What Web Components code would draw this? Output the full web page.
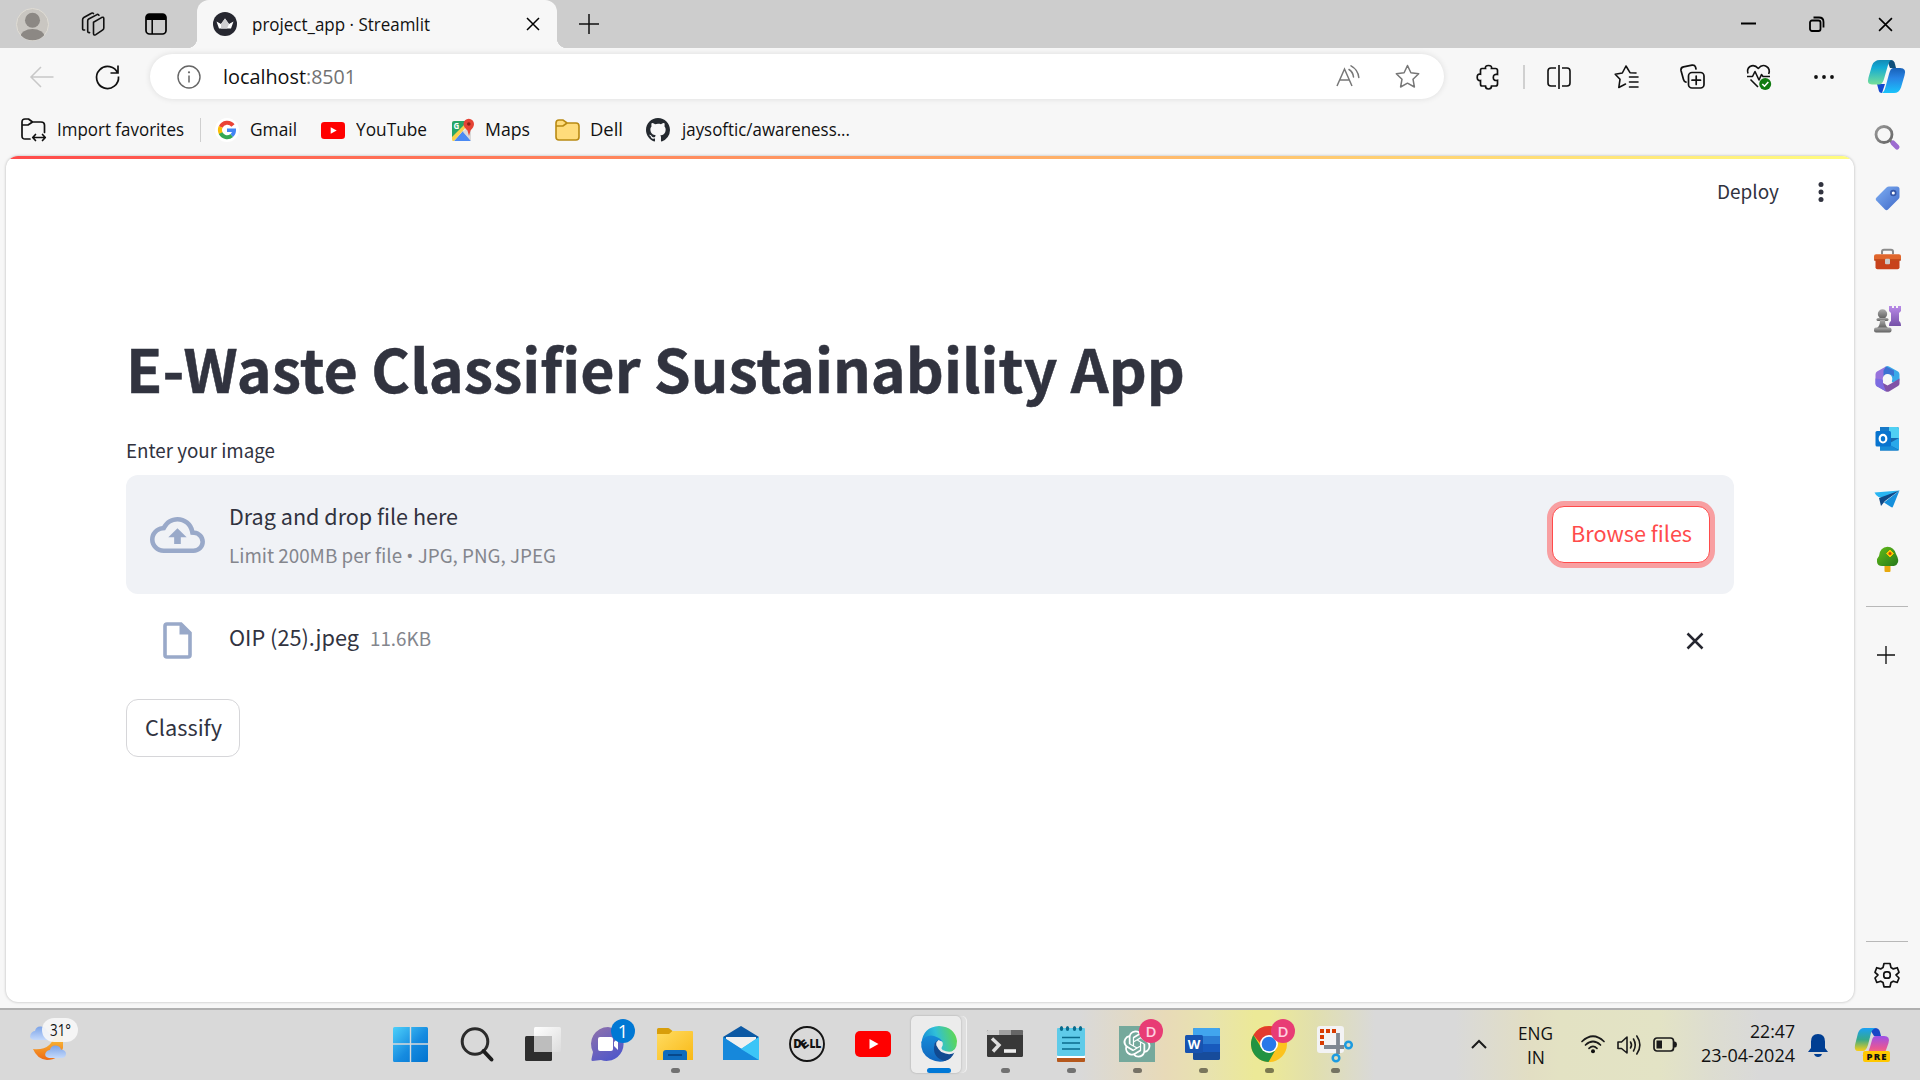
<!DOCTYPE html>
<html lang="en"><head><meta charset="utf-8"><title>project_app · Streamlit</title>
<style>
html,body{margin:0;width:1920px;height:1080px;overflow:hidden;background:#f7f7f7}
body{font-family:"Open Sans","Noto Sans",sans-serif;font-size:18px;color:#111}
</style></head><body>
<desk-top></desk-top>
<script>
const ICONS={
avatar:[33,33,`<circle cx="16.5" cy="16.5" r="16" fill="#c9c6c1" stroke="#e0ddd5" stroke-width="1"/><clipPath id="c"><circle cx="16.5" cy="16.5" r="15.8"/></clipPath><g fill="#8c8884" clip-path="url(#c)"><circle cx="16.5" cy="12.2" r="7.5"/><ellipse cx="16.5" cy="28.5" rx="12" ry="7.5"/></g>`],
spaces:[25,24,`<g fill="none" stroke="#111" stroke-width="1.6" stroke-linejoin="round" stroke-linecap="round"><path d="M13.5 10.2 21.5 5.6q2.2-1 2.3 1v9.4q0 1.2-1 1.8l-7 4.8q-2.3 1.2-2.3-1z"/><path d="M9.6 20.6q-1.9.3-1.9-1.6V8.8q0-1.2 1-1.8L17 2.6q1.4-.6 1.9.6"/><path d="M4.6 18q-2 .4-2-1.6V7.8q0-1.6 1.2-2.3L11.5 1.2q1.4-.6 2 .4"/></g>`],
tabs:[22,22,`<rect x="1" y="1" width="20" height="20" rx="3.5" fill="none" stroke="#000" stroke-width="1.7"/><path d="M1 7V4.5Q1 1 4.500 1h13Q21 1 21 4.500V7z"/><path d="M7.200 6v15" stroke="#000" stroke-width="1.500"/>`],
crown:[24,24,`<circle cx="12" cy="12" r="12" fill="#262730"/><path d="M3.500 9.500 8 12l4-5.500 4 5.500 4.500-2.500-2.500 7H6z" fill="#fff"/><path d="M8 12l4-5.500 4 5.500-2 4.500H8z" fill="#cfcfd2"/>`],
x:[14,14,`<path d="M1 1 13 13M13 1 1 13" stroke="#000" stroke-width="1.500"/>`],
plus:[20,20,`<path d="M10 0V20M0 10H20" stroke="#111" stroke-width="1.500"/>`],
min:[16,16,`<path d="M0 7.500H15" stroke="#000" stroke-width="2"/>`],
restore:[16,16,`<g fill="none" stroke="#000" stroke-width="1.800"><rect x="1" y="4.500" width="10.500" height="10.500" rx="2"/><path d="M4.500 1.500H10Q14.500 1.500 14.500 6v5.500"/></g>`],
back:[24,22,`<path d="M23.500 11H1M11 1 1 11 11 21" fill="none" stroke="#c8c8c8" stroke-width="1.500"/>`],
reload:[25,25,`<path d="M22.800 9.500A11 11 0 1 0 23.500 12.500M23 1.500V9H15.500" fill="none" stroke="#111" stroke-width="1.700"/>`],
info:[24,24,`<circle cx="12" cy="12" r="11" fill="none" stroke="#666" stroke-width="1.400"/><path d="M12 10.500V17.500" stroke="#666" stroke-width="1.500"/><circle cx="12" cy="7.300" r="1.100" fill="#666"/>`],
read:[24,24,`<g fill="none" stroke="#777" stroke-width="1.500"><path d="M1 21 8.500 4 16 21M3.800 15H13.300"/><path d="M13 4.500Q17 7 17.500 12M15 .8Q22 4.500 22.800 12.500" stroke-linecap="round"/></g>`],
star:[25,25,`<path d="M12.500 1.500 15.900 8.700 23.700 9.700 18 15.200 19.400 23 12.500 19.200 5.600 23 7 15.200 1.300 9.700 9.100 8.700z" fill="none" stroke="#777" stroke-width="1.500" stroke-linejoin="round"/>`],
puzzle:[24,26,`<path d="M6 4.500H9.500Q8.800 1.500 12.500 1.500T15.500 4.500H19.500Q21.500 4.500 21.500 6.500V10.500Q17.300 9.800 17.300 13.500T21.500 16.300V20Q21.500 22 19.500 22H15.500Q15.500 25 12.500 25T9.500 22H6Q4.500 22 4.500 20V16.500Q1.200 17 1.200 13.300T4.500 10.200V6.500Q4.500 4.500 6 4.500Z" fill="none" stroke="#111" stroke-width="1.700"/>`],
split:[24,24,`<g fill="none" stroke="#111" stroke-width="1.600"><path d="M12 0V24M9 3H4Q1 3 1 6V18Q1 21 4 21H9M15 3H20Q23 3 23 6V18Q23 21 20 21H15"/></g>`],
favs:[25,24,`<g fill="none" stroke="#111" stroke-width="1.600" stroke-linejoin="round" stroke-linecap="round"><path d="M22 8 16 7.700 12 1 8.300 8 1.200 9.200 6 14.300 4.800 22.500 11.500 19"/><path d="M15.500 12H24M15.500 17H24M15.500 22H24"/></g>`],
colls:[25,25,`<g fill="none" stroke="#111" stroke-width="1.700" stroke-linecap="round"><rect x="8.500" y="8.500" width="15.500" height="15.500" rx="3.500"/><path d="M16.200 12V20.500M12 16.200H20.500M16 5 15.500 3Q14.700.8 12 1.200L3.500 2.800Q.5 3.500 1 6.500L3.500 15.500Q4.200 18 6 18.200"/></g>`],
heart:[25,26,`<g fill="none" stroke="#111" stroke-width="1.600" stroke-linejoin="round"><path d="M2 9.500Q.5 5 4 2.500 8.500 0 12.300 4.500 16-.3 20.500 2.500 24.500 5 22.700 10M1 12.500H6.500L9 7.500 13 16 15.500 10.500 17 12.500H24M4.500 15.500 12 23"/></g><circle cx="19.200" cy="20" r="6" fill="#107c10"/><path d="M16.300 20 18.500 22.200 22.300 18" fill="none" stroke="#fff" stroke-width="1.600"/>`],
dots:[20,6,`<g fill="#111"><circle cx="2" cy="3" r="1.900"/><circle cx="10" cy="3" r="1.900"/><circle cx="18" cy="3" r="1.900"/></g>`],
copilot:[37,33,`<defs><linearGradient id="a" x2="0" y2="1"><stop stop-color="#138ab5"/><stop offset=".3" stop-color="#12aad5"/><stop offset="1" stop-color="#75df98"/></linearGradient><linearGradient id="b" x2="0" y2="1"><stop stop-color="#1861b8"/><stop offset=".4" stop-color="#2884e4"/><stop offset="1" stop-color="#19c3fb"/></linearGradient></defs><path d="M19 0H23Q26 0 27 4L28 8H22Z" fill="#104f7b"/><path d="M9 24H17L14 33Q11 33 10.500 29.500Z" fill="#1449ce"/><path d="M25 8H32Q39 8 36.500 15.500L33 27.500Q31 33 26 33H13Q16 33 17.500 27L21 14Q22.500 8 25 8Z" fill="url(#b)"/><path d="M12 0H24Q21.500 0 20 5L16 19Q14.500 24.500 11 24.500H4Q-1.500 24.500.5 17.500L4 5.500Q6 0 12 0Z" fill="url(#a)"/>`],
import:[25,24,`<g fill="none" stroke="#111" stroke-width="1.700" stroke-linejoin="round" stroke-linecap="round"><path d="M9 21H4Q1 21 1 18V4Q1 1 4 1H7.500L11.500 4H20Q23.500 4 23.500 7V14.500M1 7H7L11.500 4M12 19.500H24M14.500 16.500 11.700 19.500 14.500 22.500M21.500 16.500 24.300 19.500 21.500 22.500"/></g>`],
google:[24,24,`<circle cx="12" cy="12" r="12" fill="#fff"/><g fill="none" stroke-width="4"><path d="M18 7.500A7.200 7.200 0 0 0 5.700 9" stroke="#ea4335"/><path d="M5.600 8.900A7.300 7.300 0 0 0 5.800 15.500" stroke="#fbbc05"/><path d="M5.600 15.200A7.200 7.200 0 0 0 16.800 17.500" stroke="#34a853"/><path d="M12 12.200H19.200Q19.200 15.500 16.800 17.500" stroke="#4285f4" stroke-width="3.600"/></g>`],
youtube:[36,26,`<rect width="36" height="26" rx="5" fill="#f00"/><path d="M14.500 8V18L23.500 13Z" fill="#fff"/>`],
maps:[24,24,`<rect x="1" y="3" width="19" height="20" rx="2" fill="#f0eded"/><path d="M1 5Q1 3 3 3H15L1 17Z" fill="#27a567"/><path d="M3 23 12 13 20 23Z" fill="#4a89f3"/><path d="M1 18 13 5 16 8 3 23H2Q1 23 1 21Z" fill="#f8d04b"/><path d="M1 14 12 3 15 5 1 19Z" fill="#27a567"/><path d="M12 14 20 6V23Z" fill="#d9d9d9"/><path d="M12.500 6A5 5 0 0 1 23 6Q23 9 19.500 12.500L18 18 16.500 12.500Q12.500 9 12.500 6Z" fill="#e54335"/><circle cx="17.800" cy="6" r="1.800" fill="#8c2116"/><text x="2.500" y="11" font-family="Open Sans" font-weight="700" font-size="8" fill="#fff">G</text>`],
folder:[25,22,`<path d="M1 4Q1 1 4 1H8L12 4H21Q24 4 24 7V18Q24 21 21 21H4Q1 21 1 18Z" fill="#ffdc7b" stroke="#b98a13" stroke-width="1.600"/><path d="M1 7H8L12 4" fill="none" stroke="#b98a13" stroke-width="1.600"/>`],
github:[24,24,`<path transform="scale(1.500)" fill="#24292f" d="M8 0C3.580 0 0 3.580 0 8c0 3.540 2.290 6.530 5.470 7.590.4.070.55-.17.55-.38 0-.19-.01-.82-.01-1.490-2.010.37-2.530-.49-2.690-.94-.09-.23-.48-.94-.82-1.130-.28-.15-.68-.52-.01-.53.63-.01 1.080.58 1.230.82.72 1.210 1.870.87 2.330.66.07-.52.28-.87.51-1.070-1.780-.2-3.640-.89-3.640-3.950 0-.87.31-1.590.82-2.150-.08-.2-.36-1.020.08-2.120 0 0 .67-.21 2.200.82A7.600 7.600 0 0 1 8 3.870c.68 0 1.360.09 2 .27 1.530-1.040 2.200-.82 2.200-.82.44 1.100.16 1.920.08 2.120.51.56.82 1.270.82 2.150 0 3.070-1.870 3.750-3.650 3.950.29.25.54.73.54 1.480 0 1.070-.01 1.930-.01 2.200 0 .21.15.46.55.38A8 8 0 0 0 16 8c0-4.420-3.580-8-8-8z"/>`],
kebab:[6,20,`<g fill="#31333f"><circle cx="3" cy="2.600" r="2.500"/><circle cx="3" cy="10" r="2.500"/><circle cx="3" cy="17.400" r="2.500"/></g>`],
cloud:[54,54,`<path transform="scale(2.290 2.250)" fill="#99a9c9" d="M19.350 10.040A7.490 7.490 0 0 0 12 4C9.110 4 6.600 5.640 5.350 8.040A5.994 5.994 0 0 0 0 14c0 3.310 2.690 6 6 6h13c2.760 0 5-2.240 5-5 0-2.640-2.050-4.780-4.650-4.960zM19 18H6c-2.210 0-4-1.790-4-4 0-2.050 1.530-3.760 3.560-3.970l1.070-.11.5-.95A5.469 5.469 0 0 1 12 6c2.620 0 4.880 1.860 5.390 4.430l.3 1.500 1.530.11A2.980 2.980 0 0 1 22 15c0 1.650-1.350 3-3 3zM8 13h2.550v3h2.900v-3H16l-4-4z"/>`],
file:[29,37,`<path d="M4 2H18L27 11V33Q27 35 25 35H4Q2 35 2 33V4Q2 2 4 2Z" fill="none" stroke="#99a9c9" stroke-width="3.600"/><path d="M16.500 1 28 12.500H16.500Z" fill="#99a9c9"/>`],
del:[18,18,`<path d="M1.500 1.500 16.500 16.500M16.500 1.500 1.500 16.500" stroke="#262730" stroke-width="2.500"/>`],
sbsearch:[27,27,`<defs><linearGradient id="a" x2="1" y2="1"><stop stop-color="#999"/><stop offset="1" stop-color="#646464"/></linearGradient></defs><g transform="translate(-.5 -1)"><circle cx="10.500" cy="10.500" r="8" fill="none" stroke="url(#a)" stroke-width="2.800"/><path d="M16 16 18.500 18.500" stroke="#777" stroke-width="2.500"/><path d="M19.500 19 23.500 23" stroke="#9c6bd0" stroke-width="5" stroke-linecap="round"/></g>`],
tag:[27,27,`<defs><linearGradient id="a" x2="1" y2="1"><stop stop-color="#7fb0f4"/><stop offset="1" stop-color="#3f68c7"/></linearGradient></defs><path d="M15 1.500H23Q25.500 1.500 25.500 4V12Q25.500 13 24.500 14L14 24.500Q12.500 26 11 24.500L2.300 15.500Q1 14 2.300 12.700L12.500 2.500Q13.500 1.500 15 1.500Z" fill="url(#a)"/><circle cx="19.300" cy="8" r="2.400" fill="#fff" stroke="#3456a8" stroke-width="1.700"/>`],
toolbox:[27,27,`<g transform="translate(0 1.200)"><path d="M8 8V5.500Q8 3.500 10 3.500H17Q19 3.500 19 5.500V8" fill="none" stroke="#8b8b8b" stroke-width="2"/><rect x="1.500" y="10" width="24" height="13" rx="2" fill="#c8421b"/><rect y="8" width="27" height="6.500" rx="2" fill="#e0662c"/><path d="M0 13.800H27" stroke="#a93410"/><rect x="11" y="12.500" width="5" height="5.500" rx="1" fill="#ccc"/></g>`],
games:[27,27,`<defs><linearGradient id="a" x2="0" y2="1"><stop stop-color="#aaa"/><stop offset="1" stop-color="#606060"/></linearGradient><linearGradient id="b" x2="0" y2="1"><stop stop-color="#b98ae8"/><stop offset="1" stop-color="#7652a8"/></linearGradient></defs><path d="M15 0H18V2H20V0H22V2H24V0H27V5L25 7V15Q27 16 27 20H15Q15 16 17 15V7L15 5Z" fill="url(#b)"/><g fill="url(#a)"><circle cx="8.500" cy="8" r="4.700"/><rect x="2.500" y="12" width="12" height="3" rx="1.500"/><path d="M6 14H11Q11 20 14 22H3Q6 20 6 14Z"/><rect y="21.500" width="17.500" height="5" rx="2"/></g>`],
m365:[27,27,`<g transform="translate(0 -.6)"><path d="M12 1Q13.500.3 15 1L24 6Q25.500 7 25.500 9V15L18 17 17 10 9 9 10 3Z" fill="#3aa9e9"/><path d="M12 1 3 6Q1.500 7 1.500 9V18Q1.500 20 3 21L9 18V12L13.500 9Z" fill="#9873dc"/><path d="M12 1 9.500 5V12L13.500 9H17L20 11V5Z" fill="#3c72d2"/><path d="M3 20.500 12 26Q13.500 26.700 15 26L24 20.500Q25.500 19.500 25.500 18V13L18 17.500 13.500 20 9 17.500Z" fill="#8153a7"/><path d="M1.500 13V18Q1.500 20 3 21L12 26 9 18V14Z" fill="#7d6ce1"/><circle cx="13.500" cy="13.500" r="4.800" fill="#f7f7f7"/></g>`],
outlook:[27,27,`<g transform="translate(0 -1)"><path d="M6 2H23Q25 2 25 4V24Q25 25.500 23 25.500H6Z" fill="#1769ae"/><path d="M6 2H15V13H6Z" fill="#1779c8"/><path d="M15 2H23Q25 2 25 4V13H15Z" fill="#50d0f3"/><path d="M6 14 25 25.500H6Z" fill="#168cd8"/><path d="M25 13V25L14 19Z" fill="#28a8ea"/><rect x="1.500" y="6" width="15.500" height="15.500" rx="1.500" fill="#0874cf"/><ellipse cx="9" cy="13.700" rx="3.300" ry="3.800" fill="none" stroke="#fff" stroke-width="2.200"/></g>`],
plane:[27,27,`<path d="M.5 6.500 25.500 4.500 10 12 4.500 11Q1.500 9 .5 6.500Z" fill="#29b5f2"/><path d="M25.500 4.500 5 12 7 20 11 15Z" fill="#104987"/><path d="M25.500 4.500 19 20.500Q18.500 22 17 21L10 16.500Z" fill="#1690dc"/>`],
tree:[27,27,`<defs><linearGradient id="a" x2="1" y2="1"><stop stop-color="#64bd18"/><stop offset="1" stop-color="#25791b"/></linearGradient></defs><rect x="10.500" y="17" width="6" height="9" rx="1" fill="#e8a90d"/><path d="M13.500.8Q20 1 22 8 26 15 23 18 22 20 18 20H8Q3.500 20 3 16 2.700 12 5 10 6 1 13.500.8Z" fill="url(#a)"/><path d="M16 4 19.500 7.500 16 11 12.500 7.500Z" fill="#ffc500" stroke="#ffc500" stroke-width="1"/><circle cx="16" cy="7.500" r="1.500" fill="#c64512"/>`],
gear:[26,26,`<path d="M10 1.500H16L17 5.600 19.300 6.900 23.300 5.700 25 10.300 22 13 25 16 23.200 20.500 19.300 19.200 17 20.500 16 24.800H10L9 20.500 6.700 19.200 2.800 20.500 1 16 4 13 1 10.300 2.700 5.700 6.700 6.900 9 5.600Z" fill="none" stroke="#111" stroke-width="1.700" stroke-linejoin="round"/><rect x="9.800" y="9.800" width="6.400" height="6.400" rx="2.500" fill="none" stroke="#111" stroke-width="1.700"/>`],
weather:[37,36,`<defs><linearGradient id="a" x2="0" y2="1"><stop stop-color="#7ba3e8"/><stop offset="1" stop-color="#c4d9fb"/></linearGradient><linearGradient id="m" x2="0" y2="1"><stop stop-color="#fccf3c"/><stop offset="1" stop-color="#ee6a17"/></linearGradient></defs><path d="M3 24Q22 26 25 8L33 8V23Q29 35 17 35 7 34 3 24Z" fill="url(#m)"/><path d="M4 15Q-1 14 .5 9.500 2 6 5 6 6 1 11 1.500 16 2 17 6 21 8 20 15Z" fill="url(#a)"/><path d="M19 33Q14 32 15.500 28 17 25 20 25 21 20 26 20.500 30 21 31 24.500 36 25 36 29 35.500 33 32 33Z" fill="url(#a)"/>`],
win:[36,36,`<defs><linearGradient id="a" gradientUnits="userSpaceOnUse" x1="0" y1="0" x2="36" y2="36"><stop stop-color="#4fd2fb"/><stop offset=".55" stop-color="#168be0"/><stop offset="1" stop-color="#0072cf"/></linearGradient></defs><path d="M1.500 1H16.800V17.300H0V2.500Q0 1 1.500 1ZM18.200 1H33.500Q35 1 35 2.500V17.300H18.200ZM0 18.700H16.800V36H1.500Q0 36 0 34.500ZM18.200 18.700H35V34.500Q35 36 33.500 36H18.200Z" fill="url(#a)"/>`],
search:[36,36,`<circle cx="16" cy="15.500" r="12.800" fill="none" stroke="#2b2b2b" stroke-width="3"/><path d="M24.500 25 32.500 33.500" stroke="#1d1d1d" stroke-width="4" stroke-linecap="round"/>`],
taskview:[36,36,`<defs><linearGradient id="a" x2="1" y2="1"><stop stop-color="#fff"/><stop offset="1" stop-color="#dcdcdc"/></linearGradient></defs><rect y="10" width="27" height="25" rx="1.500" fill="#2e2e2e"/><rect x="9" y="1" width="27" height="25" rx="1.500" fill="url(#a)"/><path d="M9 10H27V26H9Z" fill="#bdbdbd"/>`],
chat:[36,36,`<defs><linearGradient id="a" x2=".6" y2="1"><stop stop-color="#9172aa"/><stop offset="1" stop-color="#5258c9"/></linearGradient></defs><path d="M17 1A17 17 0 1 1 10 34L1.500 35Q0 35 .5 33L2 26A17 17 0 0 1 17 1Z" fill="url(#a)"/><rect x="7" y="11" width="15" height="14" rx="2" fill="#fff"/><path d="M23 16 27 12.500V24L23 20Z" fill="#fff"/>`],
explorer:[36,36,`<defs><linearGradient id="a" x2="1" y2="1"><stop stop-color="#ffdc62"/><stop offset="1" stop-color="#f9b916"/></linearGradient></defs><path d="M0 3.500Q0 2 1.500 2H11Q12 2 13 3L15.500 5V10H0Z" fill="#d89e0b"/><path d="M0 8H12L15.500 5H35Q36 5 36 6V34H0Z" fill="url(#a)"/><path d="M6 34V27Q6 24 9 24H27Q30 24 30 27V34Z" fill="#0f6cbd"/><path d="M11 29H25" stroke="#063f7d" stroke-width="1.600"/>`],
mail:[36,36,`<path d="M0 11 18 0 36 11V14H0Z" fill="#0c59a4"/><path d="M3 11H33V24H3Z" fill="#f0f0f0"/><path d="M0 11 18 23 36 11V34H0Z" fill="#2cb4f0"/><path d="M0 11 36 34H0Z" fill="#1688db"/><path d="M36 11V34L18 23Z" fill="#3cc5f7"/>`],
dell:[36,36,`<circle cx="18" cy="18" r="17" fill="none" stroke="#151515" stroke-width="1.900"/><g font-family="Open Sans" font-weight="800" font-size="11.500" fill="#111"><text x="4.300" y="22" textLength="8.500" lengthAdjust="spacingAndGlyphs">D</text><text transform="translate(14.600 24) rotate(-38)" textLength="8" lengthAdjust="spacingAndGlyphs">E</text><text x="20.500" y="22" textLength="6" lengthAdjust="spacingAndGlyphs">L</text><text x="26.200" y="22" textLength="6" lengthAdjust="spacingAndGlyphs">L</text></g>`],
edge:[36,36,`<defs><linearGradient id="a" x1="0" y1=".6" x2="1" y2=".4"><stop stop-color="#1389d6"/><stop offset=".45" stop-color="#30bfd9"/><stop offset="1" stop-color="#5fd84d"/></linearGradient><linearGradient id="b" x2="0" y2="1"><stop stop-color="#178bd8"/><stop offset="1" stop-color="#1165bd"/></linearGradient></defs><path d="M.5 17Q2 1 18 0 34 1 36 15 36 26 27 26.500 19 26 20.500 22 23 17 17 13 9 8 .5 17Z" fill="url(#a)"/><path d="M.3 16Q5 8 13 10 20 12 21.500 16 14 14 13 21 13 30 25 34.500 18 37.500 9 33-1 27 .3 16Z" fill="url(#b)"/><path d="M13 21Q13 15 18 14.500 16.500 19 18.500 22 24 29 33.500 26 31 33 24 35 12 32 13 21Z" fill="#114a91"/><path d="M18.300 14.600Q15.500 21 21 25 28 28.500 33.500 25.500" fill="none" stroke="#ececec" stroke-width="2.500"/><circle cx="18.500" cy="18" r="3.300" fill="#ececec"/>`],
term:[36,36,`<rect y="4" width="36" height="27" rx="1.500" fill="#383838"/><path d="M1 4H12V9H0V5Z" fill="#d0d0d0"/><path d="M12 4H24V9H12Z" fill="#a0a0a0"/><path d="M24 4H35L36 5V9H24Z" fill="#666"/><path d="M5 12.500 12 19 6 25.500" fill="none" stroke="#ddd" stroke-width="3.400"/><path d="M17 25H29" stroke="#eee" stroke-width="3.600"/>`],
note:[36,36,`<path d="M4 31H32V35Q32 36 31 36H5Q4 36 4 35Z" fill="#b5581d"/><path d="M4 29H32V32H4Z" fill="#fff"/><rect x="4" y="2" width="28" height="28" rx="1" fill="#5fcbe9"/><path d="M9 11.500H27M9 17H27M9 23H27" stroke="#0b6b8c" stroke-width="1.700"/><g fill="#0b6b8c"><ellipse cx="8.500" cy="2.500" rx="1.700" ry="2.500"/><ellipse cx="14.500" cy="2.500" rx="1.700" ry="2.500"/><ellipse cx="21.500" cy="2.500" rx="1.700" ry="2.500"/><ellipse cx="27.500" cy="2.500" rx="1.700" ry="2.500"/></g>`],
gpt:[36,36,`<path d="M0 0H36V36H0Z" fill="#75a99c"/><path transform="translate(4.500 4.500) scale(1.125)" fill="#fff" d="M22.280 9.820a5.980 5.980 0 0 0-.52-4.910 6.050 6.050 0 0 0-6.510-2.900A6.070 6.070 0 0 0 4.980 4.180a5.980 5.980 0 0 0-4 2.900 6.050 6.050 0 0 0 .74 7.100 5.980 5.980 0 0 0 .51 4.910 6.050 6.050 0 0 0 6.520 2.900A5.980 5.980 0 0 0 13.260 24a6.060 6.060 0 0 0 5.770-4.210 5.990 5.990 0 0 0 4-2.900 6.060 6.060 0 0 0-.75-7.070zm-9.020 12.610a4.480 4.480 0 0 1-2.880-1.040l.14-.08 4.780-2.760a.8.8 0 0 0 .39-.68v-6.740l2.020 1.170a.07.07 0 0 1 .04.050v5.580a4.500 4.500 0 0 1-4.490 4.500zm-9.660-4.130a4.470 4.470 0 0 1-.54-3.010l.14.090 4.780 2.760a.77.77 0 0 0 .78 0l5.840-3.370v2.330a.08.08 0 0 1-.03.060L9.740 19.950a4.500 4.500 0 0 1-6.140-1.650zM2.340 7.900a4.490 4.490 0 0 1 2.370-1.980V11.600a.77.77 0 0 0 .39.68l5.810 3.350-2.020 1.170a.08.08 0 0 1-.07 0l-4.830-2.790A4.500 4.500 0 0 1 2.340 7.900zm16.600 3.860L13.100 8.360l2.020-1.160a.08.08 0 0 1 .07 0l4.830 2.790a4.490 4.490 0 0 1-.68 8.100v-5.680a.79.79 0 0 0-.41-.65zm2.010-3.030-.14-.09-4.770-2.780a.78.78 0 0 0-.79 0L9.410 9.230V6.900a.07.07 0 0 1 .03-.06l4.830-2.790a4.500 4.500 0 0 1 6.680 4.680zM8.310 12.860l-2.020-1.160a.08.08 0 0 1-.04-.06V6.070a4.500 4.500 0 0 1 7.380-3.450l-.14.08-4.780 2.760a.8.8 0 0 0-.39.68zm1.100-2.370 2.600-1.500 2.610 1.500v3l-2.600 1.500-2.610-1.500z"/>`],
word:[36,36,`<rect x="8" y="2" width="27" height="32" rx="1.500" fill="#174c9b"/><path d="M8 18H35V26H8Z" fill="#185abd"/><path d="M8 10H35V18H8Z" fill="#2b7cd3"/><path d="M8 10V3.500Q8 2 9.500 2H33.500Q35 2 35 3.500V10Z" fill="#41a5ee"/><rect y="9" width="18" height="18" rx="1.500" fill="#1753b0"/><text x="9" y="22.500" font-family="Open Sans" font-weight="700" font-size="13" fill="#fff" text-anchor="middle">W</text>`],
chrome:[36,36,`<circle cx="18" cy="18" r="18" fill="#fcc31e"/><path d="M18 18H10L2.400 9A18 18 0 0 1 33.600 9Z" fill="#e33b2e"/><path d="M2.400 9 10.500 22 18 26 25.500 22 17.500 36A18 18 0 0 1 2.400 9Z" fill="#229342"/><circle cx="18" cy="18" r="9" fill="#fff"/><circle cx="18" cy="18" r="7.300" fill="#2878e9"/>`],
snip:[36,36,`<rect width="27" height="27" rx="3" fill="#f3f3f5"/><g fill="#d83b01"><path d="M3 3H7V7H3ZM9 3H13V7H9ZM15 3H19V7H15ZM3 9H7V13H3ZM3 15H7V19H3Z"/></g><path d="M7 21H27M21 7V28" stroke="#7e8792" stroke-width="3.800"/><circle cx="31.500" cy="19" r="3.300" fill="none" stroke="#1c9be0" stroke-width="2.500"/><circle cx="19" cy="32" r="3.300" fill="none" stroke="#1c9be0" stroke-width="2.500"/>`],
chev:[16,10,`<path d="M1 9 8 2 15 9" fill="none" stroke="#1a1a1a" stroke-width="2"/>`],
wifi:[24,19,`<g fill="none" stroke="#1a1a1a" stroke-width="1.700" stroke-linecap="round"><path d="M1 6.500Q12-4 23 6.500M4.500 10Q12 3 19.500 10M8 13.300Q12 9.500 16 13.300"/></g><circle cx="12" cy="16.300" r="2" fill="#111"/>`],
vol:[24,20,`<g fill="none" stroke="#1a1a1a" stroke-width="1.600" stroke-linejoin="round" stroke-linecap="round"><path d="M1 7H4.500L10 2V18L4.500 13.500H1Z"/><path d="M13.500 7Q15.500 10 13.500 13M16.500 4Q20 10 16.500 16M19.800 1Q26 10 19.800 19"/></g>`],
bat:[24,15,`<rect x="1" y="1" width="19.500" height="13" rx="3" fill="none" stroke="#1a1a1a" stroke-width="1.700"/><rect x="3.500" y="3.500" width="5.500" height="8" fill="#1a1a1a"/><path d="M21 4.500H22Q24 5 24 7.500T22 10.500H21Z" fill="#1a1a1a"/>`],
bell:[20,23,`<path d="M10 0Q17 0 17 7.500V14L20 18H0L3 14V7.500Q3 0 10 0Z" fill="#003e92"/><path d="M6 20H14Q13 23 10 23T6 20Z" fill="#003e92"/>`],
pre:[36,36,`<defs><linearGradient id="a" x2="0" y2="1"><stop stop-color="#1aa0f5"/><stop offset=".5" stop-color="#36a98b"/><stop offset="1" stop-color="#fbcf16"/></linearGradient><linearGradient id="b" x2="0" y2="1"><stop stop-color="#9c50e8"/><stop offset=".6" stop-color="#e75696"/><stop offset="1" stop-color="#ff8465"/></linearGradient></defs><path d="M15 1H21Q25 1 26 5L27 9H20Z" fill="#1846c6"/><path d="M22 9H30Q36.500 9 34.500 16L32 23Q30 29 25 29H8Q14 28 16 20L18 13Q19 9 22 9Z" fill="url(#b)"/><path d="M10 1H22Q18 2 17 6L14 18Q12 24 9 24H4Q0 24 1 18L4 6Q6 1 10 1Z" fill="url(#a)"/><rect x="9" y="24" width="27" height="11" rx="2" fill="#ffc800"/><text x="22.500" y="33" font-family="Open Sans" font-weight="800" font-size="9.500" text-anchor="middle" textLength="20" fill="#111">PRE</text>`]
};
const define=(name,html)=>customElements.define(name,class extends HTMLElement{
  constructor(){super();this.attachShadow({mode:'open'}).innerHTML=html}
});
customElements.define('sys-icon',class extends HTMLElement{
  connectedCallback(){
    const [w,h,s]=ICONS[this.getAttribute('name')];
    const dw=+this.getAttribute('w')||w,dh=+this.getAttribute('h')||h;
    (this.shadowRoot||this.attachShadow({mode:'open'})).innerHTML=`<style>:host{display:block;flex:none;width:${dw}px;height:${dh}px}svg{display:block;overflow:visible}</style><svg width="${dw}" height="${dh}" viewBox="0 0 ${w} ${h}" preserveAspectRatio="none">${s}</svg>`;
  }
});
/* A line of text condensed or stretched so that it spans exactly the given width. */
customElements.define('fit-text',class extends HTMLElement{
  connectedCallback(){
    if(this.shadowRoot)return;
    const w=+this.getAttribute('w');
    this.attachShadow({mode:'open'}).innerHTML=`<style>:host{display:block;flex:none;width:${w}px;white-space:pre}span{display:inline-block;transform-origin:0 50%}</style><span><slot></slot></span>`;
    const s=this.shadowRoot.querySelector('span');
    s.style.transform=`scaleX(${(w/s.getBoundingClientRect().width).toFixed(4)})`;
  }
});
define('title-bar',`<style>:host{display:flex;height:48px;background:#cdcdcd;align-items:center}
.tab{position:relative;margin-left:30px;box-sizing:border-box;width:360px;height:48px;background:#f7f7f7;border-radius:12px 12px 0 0;display:flex;align-items:center;padding:0 17px 0 16px;line-height:46px}
.tab::before,.tab::after{content:"";position:absolute;bottom:0;width:10px;height:10px}
.tab::before{left:-10px;background:radial-gradient(circle at 0 0,#0000 10px,#f7f7f7 10.500px)}
.tab::after{right:-10px;background:radial-gradient(circle at 100% 0,#0000 10px,#f7f7f7 10.500px)}
</style><sys-icon name="avatar" style="margin-left:16px"></sys-icon><sys-icon name="spaces" style="margin-left:31px"></sys-icon><sys-icon name="tabs" style="margin-left:40px"></sys-icon>
<div class="tab"><sys-icon name="crown"></sys-icon><fit-text w="178" style="margin-left:15px;margin-right:auto">project_app · Streamlit</fit-text><sys-icon name="x"></sys-icon></div>
<sys-icon name="plus" style="margin-left:22px;margin-right:auto"></sys-icon>
<sys-icon name="min" style="margin-right:52px"></sys-icon><sys-icon name="restore" style="margin-right:53px"></sys-icon><sys-icon name="x" w="15" h="15" style="margin-right:27px"></sys-icon>`);
define('tool-bar',`<style>:host{display:flex;height:57px;align-items:center;box-sizing:border-box}
.pill{margin-left:30px;width:1294px;height:45px;border-radius:23px;background:#fff;box-shadow:0 0 6px #0000001c;display:flex;align-items:center;box-sizing:border-box;padding:0 24px 0 27px;font-size:20.500px;line-height:42px}
.sep{width:2px;height:24px;background:#d0d0d0;margin:0 23px 0 25px}fit-text{margin-top:-2px}
.p{color:#727272;margin-right:auto}</style>
<sys-icon name="back" style="margin-left:30px"></sys-icon><sys-icon name="reload" style="margin-left:41px"></sys-icon>
<div class="pill"><sys-icon name="info"></sys-icon><fit-text w="83" style="margin-left:22px">localhost</fit-text><fit-text class="p" w="50">:8501</fit-text><sys-icon name="read" style="margin-right:35px"></sys-icon><sys-icon name="star"></sys-icon></div>
<sys-icon name="puzzle" style="margin-left:32px;margin-right:-2px"></sys-icon><i class="sep"></i><sys-icon name="split" style="margin-left:-1px"></sys-icon><sys-icon name="favs" style="margin-left:43px"></sys-icon><sys-icon name="colls" style="margin-left:41px"></sys-icon><sys-icon name="heart" style="margin-left:41px"></sys-icon><sys-icon name="dots" style="margin-left:43px"></sys-icon><sys-icon name="copilot" style="margin-left:34px"></sys-icon>`);
define('book-mark',`<style>:host{display:flex;align-items:center}</style><slot></slot>`);
define('bookmarks-bar',`<style>:host{display:flex;height:51px;align-items:center;padding-left:21px;line-height:44px;box-sizing:border-box;padding-bottom:1px}
book-mark{margin-right:24px;gap:12px}fit-text{margin-top:-3px}i{width:1px;height:24px;background:#cfcfcf;margin-right:14px;margin-left:-8px}</style>
<book-mark style="gap:11px"><sys-icon name="import"></sys-icon><fit-text w="127">Import favorites</fit-text></book-mark><i></i>
<book-mark style="margin-right:24px;gap:11px"><sys-icon name="google"></sys-icon><fit-text w="47">Gmail</fit-text></book-mark>
<book-mark style="gap:11px"><sys-icon name="youtube" w="24" h="17"></sys-icon><fit-text w="71">YouTube</fit-text></book-mark>
<book-mark style="margin-right:25px;gap:10px"><sys-icon name="maps"></sys-icon><fit-text w="45">Maps</fit-text></book-mark>
<book-mark style="gap:10px;margin-right:23px"><sys-icon name="folder"></sys-icon><fit-text w="33">Dell</fit-text></book-mark>
<book-mark><sys-icon name="github"></sys-icon><fit-text w="168">jaysoftic/awareness...</fit-text></book-mark>`);
define('st-button',`<style>:host{display:flex;align-items:center;justify-content:center;box-sizing:border-box;height:58px;border:1px solid #d6d6d9;border-radius:12px;background:#fff;font-size:21.500px;line-height:26px;padding-bottom:3px}
:host([focused]){height:57px;color:#ff4b4b;border-color:#ff4b4b;box-shadow:0 0 0 5px #ff4b4b80}</style><slot></slot>`);
define('file-uploader',`<style>:host{display:block}.drop{display:flex;align-items:center;height:119px;box-sizing:border-box;padding:0 24px;border-radius:12px;background:#f0f2f6}
.tx{display:flex;flex-direction:column;margin:2px auto 0 25px}.a{font-size:21.500px;line-height:39px}.b{font-size:18.800px;line-height:39px;color:#84868d}
.dot{font-family:"Open Sans",sans-serif}
.file{display:flex;align-items:center;height:94px;box-sizing:border-box;padding:0 30px 0 37px}
st-button{width:158px}</style>
<div class="drop"><sys-icon name="cloud"></sys-icon><div class="tx"><fit-text class="a" w="229">Drag and drop file here</fit-text><fit-text class="b" w="327">Limit 200MB per file <span class="dot">•</span> JPG, PNG, JPEG</fit-text></div><st-button focused><fit-text w="121">Browse files</fit-text></st-button></div>
<div class="file"><sys-icon name="file" style="margin-top:-1px"></sys-icon><fit-text class="a" w="130" style="margin-left:37px;margin-top:-9px">OIP (25).jpeg</fit-text><fit-text class="b" w="61" style="margin:-8px auto 0 11px">11.6KB</fit-text><sys-icon name="del"></sys-icon></div>`);
define('page-view',`<style>:host{display:flex;flex-direction:column;width:1848px;height:846px;margin-left:6px;border-radius:12px;background:#fff;overflow:hidden;box-shadow:0 0 3px #0004;color:#31333f;font-family:"Noto Sans CJK SC",sans-serif}
.bar{height:3px;background:linear-gradient(90deg,#ff4b4b,#fffd80);flex:none}
header{display:flex;justify-content:flex-end;align-items:center;height:66px;padding-right:30px;font-size:18.800px;line-height:30px;gap:39px}
header fit-text{margin-top:-2px}
main{padding:98px 120px 0;display:flex;flex-direction:column;align-items:flex-start}
h1{margin:0;font-size:59.100px;line-height:88px;font-weight:700;-webkit-text-stroke:.5px #31333f}
.l{font-size:18.800px;line-height:30px;margin-top:24px;margin-bottom:10px}file-uploader{width:1608px}st-button{width:114px;margin-top:11px}</style>
<div class="bar"></div><header><fit-text w="62">Deploy</fit-text><sys-icon name="kebab"></sys-icon></header>
<main><h1><fit-text w="1059">E-Waste Classifier Sustainability App</fit-text></h1><fit-text class="l" w="149">Enter your image</fit-text><file-uploader></file-uploader><st-button><fit-text w="77">Classify</fit-text></st-button></main>`);
define('side-bar',`<style>:host{display:flex;flex-direction:column;align-items:center;width:42px;height:852px;margin-left:12px;box-sizing:border-box}
.icons{display:flex;flex-direction:column;gap:33.200px;margin-top:-31px}
i{width:42px;height:1px;background:#b8b8b8;flex:none}</style>
<div class="icons"><sys-icon name="sbsearch"></sys-icon><sys-icon name="tag"></sys-icon><sys-icon name="toolbox"></sys-icon><sys-icon name="games"></sys-icon><sys-icon name="m365"></sys-icon><sys-icon name="outlook"></sys-icon><sys-icon name="plane"></sys-icon><sys-icon name="tree"></sys-icon></div>
<i style="margin-top:33px"></i><sys-icon name="plus" w="18" h="18" style="margin-top:39px;margin-right:2px"></sys-icon><i style="margin-top:auto"></i><sys-icon name="gear" style="margin:20px 0 20px"></sys-icon>`);
define('task-item',`<style>:host{position:relative;display:flex;justify-content:center;align-items:center;width:66px;height:70px;padding-bottom:2px;box-sizing:border-box}
:host([open])::after,:host([active])::after{content:"";position:absolute;bottom:7px;left:29px;width:9px;height:5px;border-radius:3px;background:#0000007a}
:host([active])::after{left:21px;width:24px;background:#0078d7}
:host([active])::before{content:"";position:absolute;left:5px;top:6px;width:50px;height:57px;border-radius:5px;background:#ececec;box-shadow:0 0 2px #0004,5px 0 0 #dfdfdf,6px 0 0 #f1f1f1}
::slotted(b){position:absolute;z-index:2;left:35px;top:9px;width:24px;height:24px;border-radius:50%;background:#e83c75;color:#ffd0e0;font:600 15px/24px "Open Sans";text-align:center}
::slotted(b.n){background:#0078d4;color:#fff;font-weight:400;font-size:18px}::slotted(sys-icon){position:relative;z-index:1}</style><slot></slot>`);
define('task-bar',`<style>:host{display:flex;height:72px;box-sizing:border-box;border-top:2px solid #b0b0b0;align-items:flex-start;background:linear-gradient(90deg,#e8dab800 1080px,#e8dab8 1165px,#e8e3ae 1210px,#ece997 1255px,#ece998 1270px,#e1dfae 1315px,#e1dfae00 1375px,#e2dec300 1455px,#e2dec3 1530px,#e3e2c3 1560px,#e3e3c5 1660px,#ddddd0 1710px,#ddddd000 1760px),#d9d9d9}
.w{width:378px;height:70px;position:relative;box-sizing:border-box;padding:15px 0 0 30px}.w div{position:absolute;left:42px;top:8px;box-sizing:border-box;width:36px;height:24px;border-radius:12px;background:#f7f7f7e8;font-size:16px;line-height:24px;padding-left:8px}
.apps{display:flex;margin-right:auto}.tray{display:flex;align-items:center;height:70px;padding-right:30px}
.t{display:flex;flex-direction:column;line-height:24px}</style>
<div class="w"><sys-icon name="weather"></sys-icon><div><fit-text w="21">31°</fit-text></div></div>
<div class="apps"><task-item><sys-icon name="win"></sys-icon></task-item><task-item><sys-icon name="search"></sys-icon></task-item><task-item><sys-icon name="taskview"></sys-icon></task-item><task-item><sys-icon name="chat"></sys-icon><b class="n">1</b></task-item><task-item open><sys-icon name="explorer"></sys-icon></task-item><task-item><sys-icon name="mail"></sys-icon></task-item><task-item><sys-icon name="dell"></sys-icon></task-item><task-item><sys-icon name="youtube"></sys-icon></task-item><task-item active><sys-icon name="edge"></sys-icon></task-item><task-item open><sys-icon name="term"></sys-icon></task-item><task-item open><sys-icon name="note"></sys-icon></task-item><task-item open><sys-icon name="gpt"></sys-icon><b>D</b></task-item><task-item open><sys-icon name="word"></sys-icon></task-item><task-item open><sys-icon name="chrome"></sys-icon><b>D</b></task-item><task-item open><sys-icon name="snip"></sys-icon></task-item></div>
<div class="tray"><sys-icon name="chev" style="margin-right:31px;margin-top:-3px"></sys-icon><div class="t" style="align-items:center;margin-right:28px;padding-bottom:1px"><fit-text w="35">ENG</fit-text><fit-text w="18">IN</fit-text></div>
<sys-icon name="wifi" style="margin-right:12px;margin-top:-2px"></sys-icon><sys-icon name="vol" style="margin-right:12px;margin-top:-1px"></sys-icon><sys-icon name="bat" style="margin-right:24px;margin-top:-1px"></sys-icon>
<div class="t" style="align-items:flex-end;margin-right:13px;padding-bottom:4px"><fit-text w="45">22:47</fit-text><fit-text w="94">23-04-2024</fit-text></div><sys-icon name="bell" style="margin-right:26px"></sys-icon><sys-icon name="pre"></sys-icon></div>`);
define('desk-top',`<style>:host{display:flex;flex-direction:column;width:1920px;height:1080px;background:#f7f7f7}.row{display:flex;height:852px}</style>
<title-bar></title-bar><tool-bar></tool-bar><bookmarks-bar></bookmarks-bar><div class="row"><page-view></page-view><side-bar></side-bar></div><task-bar></task-bar>`);
</script></body></html>
